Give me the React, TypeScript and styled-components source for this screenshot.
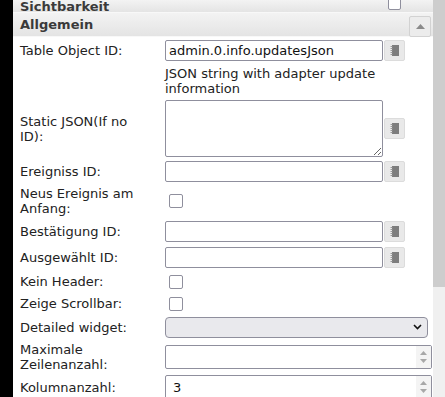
import React from "react";
import styled, { createGlobalStyle } from "styled-components";

const GlobalStyle = createGlobalStyle`
  html, body {
    margin: 0;
    padding: 0;
    background: #000;
    overflow: hidden;
  }
  body {
    font-family: "DejaVu Sans", Verdana, sans-serif;
    font-size: 13px;
    color: #222;
  }
`;

const Page = styled.div`
  display: flex;
  height: 397px;
  width: 445px;
`;

const LeftStrip = styled.div`
  width: 13px;
  flex-shrink: 0;
  background: #000;
`;

const Panel = styled.div`
  flex: 1;
  background: #fff;
  overflow: hidden;
`;

const ScrollBar = styled.div`
  width: 12px;
  flex-shrink: 0;
  background: #f0f0f0;
  display: flex;
  flex-direction: column;
`;

const ScrollThumb = styled.div`
  height: 287px;
  background: #cdcdcd;
`;

const GroupHeader = styled.div<{ $h?: number }>`
  display: flex;
  align-items: center;
  justify-content: space-between;
  height: ${(p) => p.$h ?? 23}px;
  line-height: 13px;
  padding: 0 2px 0 7px;
  background: linear-gradient(#f3f3f3, #e4e4e4);
  border-bottom: 1px solid #f8f8f8;
  font-weight: bold;
  color: #3a3a3a;
  font-size: 13px;
`;

const HeaderCheck = styled.span`
  align-self: flex-start;
  width: 11px;
  height: 11px;
  margin: -3px 30px 0 0;
  border: 1px solid #8f8f9d;
  border-radius: 2px;
  background: #fff;
`;

const CollapseButton = styled.span`
  width: 20px;
  height: 19px;
  margin-top: 4px;
  border: 1px solid #d2d2d2;
  border-radius: 2px;
  background: #ececec;
  display: flex;
  align-items: center;
  justify-content: center;
`;

const Row = styled.div<{ $h?: number }>`
  display: grid;
  grid-template-columns: 152px 1fr;
  align-items: center;
  min-height: ${(p) => p.$h ?? 26}px;
`;

const Label = styled.div`
  padding-left: 7px;
  padding-right: 20px;
  line-height: 15px;
`;

const Value = styled.div<{ $right?: number }>`
  display: flex;
  align-items: center;
  padding-right: ${(p) => p.$right ?? 28}px;
`;

const TextInput = styled.input`
  box-sizing: border-box;
  width: 218px;
  height: 21px;
  border: 1px solid #8f8f9d;
  border-radius: 2px;
  padding: 0 3px;
  font-family: "DejaVu Sans", Verdana, sans-serif;
  font-size: 13px;
  color: #111;
  outline: none;
`;

const TextArea = styled.textarea`
  box-sizing: border-box;
  width: 218px;
  height: 57px;
  border: 1px solid #8f8f9d;
  border-radius: 2px;
  font-family: "DejaVu Sans", Verdana, sans-serif;
  font-size: 13px;
  outline: none;
`;

const IdButton = styled.span`
  box-sizing: border-box;
  width: 21px;
  height: 21px;
  margin-left: 1px;
  border: 1px solid #dcdcdc;
  border-radius: 2px;
  background: #e9e9e9;
  display: flex;
  align-items: center;
  justify-content: center;
`;

const Hint = styled.div`
  padding: 3px 30px 2px 0;
  line-height: 15px;
  color: #222;
`;

const CheckBox = styled.span`
  box-sizing: border-box;
  width: 14px;
  height: 14px;
  margin-left: 4px;
  border: 1.5px solid #8f8f9d;
  border-radius: 2px;
  background: #fff;
`;

const SelectWrap = styled.div`
  position: relative;
  flex: 1;
`;

const Select = styled.select`
  box-sizing: border-box;
  width: 100%;
  height: 21px;
  appearance: none;
  border: 1px solid #8f8f9d;
  border-radius: 4px;
  background: #e9e9ed;
  font-family: "DejaVu Sans", Verdana, sans-serif;
  font-size: 13px;
  outline: none;
`;

const Chevron = styled.svg`
  position: absolute;
  right: 6px;
  top: 7px;
  pointer-events: none;
`;

const NumberBox = styled.div<{ $h: number }>`
  box-sizing: border-box;
  flex: 1;
  height: ${(p) => p.$h}px;
  display: flex;
  border: 1px solid #8f8f9d;
  border-radius: 2px;
  background: #fff;
`;

const NumberInput = styled.input`
  flex: 1;
  min-width: 0;
  border: none;
  outline: none;
  padding: 0 7px;
  font-family: "DejaVu Sans", Verdana, sans-serif;
  font-size: 13px;
  color: #111;
  background: transparent;
`;

const Spinner = styled.div`
  width: 15px;
  display: flex;
  flex-direction: column;
  align-items: center;
  justify-content: center;
  gap: 4px;
  background: #f4f4f4;
`;

const IdIcon = () => (
  <svg width="9" height="11" viewBox="0 0 9 11">
    <rect x="2" y="0" width="7" height="11" fill="#7d7d7d" />
    {[1, 3, 5, 7, 9].map((y) => (
      <rect key={y} x="0.5" y={y} width="2" height="1" fill="#9a9a9a" />
    ))}
  </svg>
);

const Up = () => (
  <svg width="7" height="4" viewBox="0 0 7 4">
    <path d="M0 4 L3.5 0 L7 4 Z" fill="#a8a8a8" />
  </svg>
);

const Down = () => (
  <svg width="7" height="4" viewBox="0 0 7 4">
    <path d="M0 0 L3.5 4 L7 0 Z" fill="#a8a8a8" />
  </svg>
);

const IdField = ({ value }: { value?: string }) => (
  <Value>
    <TextInput defaultValue={value} />
    <IdButton>
      <IdIcon />
    </IdButton>
  </Value>
);

const Check = () => (
  <Value>
    <CheckBox />
  </Value>
);

const SpinField = ({ value, h }: { value?: string; h: number }) => (
  <Value $right={1}>
    <NumberBox $h={h}>
      <NumberInput defaultValue={value} />
      <Spinner>
        <Up />
        <Down />
      </Spinner>
    </NumberBox>
  </Value>
);

export default function App() {
  return (
    <>
      <GlobalStyle />
      <Page>
        <LeftStrip />
        <Panel>
          <GroupHeader $h={12}>
            Sichtbarkeit
            <HeaderCheck />
          </GroupHeader>
          <GroupHeader>
            Allgemein
            <CollapseButton>
              <svg width="9" height="5" viewBox="0 0 9 5">
                <path d="M0 5 L4.5 0 L9 5 Z" fill="#8a8a8a" />
              </svg>
            </CollapseButton>
          </GroupHeader>
          <Row>
            <Label>Table Object ID:</Label>
            <IdField value="admin.0.info.updatesJson" />
          </Row>
          <Row>
            <div />
            <Hint>JSON string with adapter update information</Hint>
          </Row>
          <Row $h={61}>
            <Label>Static JSON(If no ID):</Label>
            <Value>
              <TextArea />
              <IdButton>
                <IdIcon />
              </IdButton>
            </Value>
          </Row>
          <Row $h={25}>
            <Label>Ereigniss ID:</Label>
            <IdField />
          </Row>
          <Row $h={34}>
            <Label>Neus Ereignis am Anfang:</Label>
            <Check />
          </Row>
          <Row>
            <Label>Bestätigung ID:</Label>
            <IdField />
          </Row>
          <Row>
            <Label>Ausgewählt ID:</Label>
            <IdField />
          </Row>
          <Row $h={23}>
            <Label>Kein Header:</Label>
            <Check />
          </Row>
          <Row $h={21}>
            <Label>Zeige Scrollbar:</Label>
            <Check />
          </Row>
          <Row $h={26}>
            <Label>Detailed widget:</Label>
            <Value $right={5}>
              <SelectWrap>
                <Select>
                  <option></option>
                </Select>
                <Chevron width="9" height="6" viewBox="0 0 9 6">
                  <path d="M1 1 L4.5 4.5 L8 1" stroke="#111" strokeWidth="1.6" fill="none" />
                </Chevron>
              </SelectWrap>
            </Value>
          </Row>
          <Row $h={33}>
            <Label>Maximale Zeilenanzahl:</Label>
            <SpinField h={24} />
          </Row>
          <Row $h={28}>
            <Label>Kolumnanzahl:</Label>
            <SpinField h={24} value="3" />
          </Row>
        </Panel>
        <ScrollBar>
          <ScrollThumb />
        </ScrollBar>
      </Page>
    </>
  );
}
